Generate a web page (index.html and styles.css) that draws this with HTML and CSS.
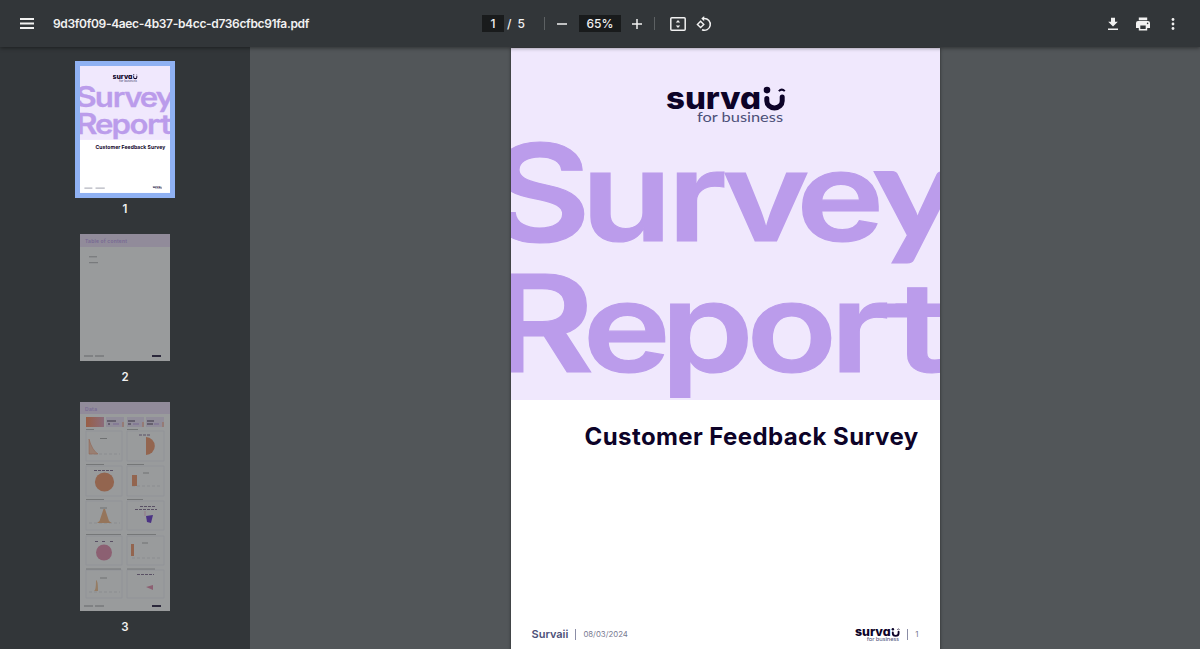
FILE: index.html
```html
<!DOCTYPE html>
<html lang="en">
<head>
  <meta charset="UTF-8">
  <title>9d3f0f09-4aec-4b37-b4cc-d736cfbc91fa.pdf</title>
  <meta name="viewport" content="width=device-width, initial-scale=1">
  <link rel="stylesheet" href="styles.css">
</head>
<body>
  <!-- shared artwork -->
  <svg class="defs" width="0" height="0">
    <symbol id="logo" viewBox="0 0 120 40">
      <text class="logo-name" x="0" y="25" textLength="95" lengthAdjust="spacingAndGlyphs">surva</text>
      <circle cx="101" cy="5.8" r="3.3" fill="#0d0328"/>
      <path d="M100.8 14.2v2.4a7.7 7 0 0 0 15.4 0v-4" fill="none" stroke="#0d0328" stroke-width="5" stroke-linecap="round"/>
      <path d="M112.8 6.8q3-3 6 0" fill="none" stroke="#0d0328" stroke-width="2"/>
      <text class="logo-sub" x="31" y="38" textLength="86" lengthAdjust="spacingAndGlyphs">for business</text>
    </symbol>
    <symbol id="cover" viewBox="0 0 429 352">
      <rect width="429" height="352" fill="#f0e8fd"/>
      <use href="#logo" x="155" y="36.3" width="120" height="40"/>
      <text class="cover-word" transform="scale(1.19 1)" y="193.2" x="-20 58.9 131.5 177.6 239.8 304.8">S<tspan class="lower">urve</tspan><tspan class="straight-y">y</tspan></text>
      <text class="cover-word" transform="scale(1.19 1)" y="323.8" x="-17.5 60.3 125.8 198 268.3 322.4">R<tspan class="lower">eport</tspan></text>
      <rect x="366" y="255.5" width="30" height="14" fill="#bb9ceb"/>
    </symbol>
  </svg>

  <header class="toolbar">
    <div class="toolbar-start">
      <svg class="icon-menu" width="14" height="11" viewBox="0 0 14 11"><path d="M0 1h14M0 5.5h14M0 10h14" stroke="#f1f1f1" stroke-width="1.8"/></svg>
      <span class="file-name">9d3f0f09-4aec-4b37-b4cc-d736cfbc91fa.pdf</span>
    </div>
    <div class="toolbar-center">
      <span class="field page-field">1</span>
      <span class="slash">/</span>
      <span class="page-total">5</span>
      <i class="divider"></i>
      <svg class="icon-minus" width="12" height="12" viewBox="0 0 12 12"><path d="M1 6h10" stroke="#f1f1f1" stroke-width="1.5"/></svg>
      <span class="field zoom-field">65%</span>
      <svg class="icon-plus" width="12" height="12" viewBox="0 0 12 12"><path d="M1 6h10M6 1v10" stroke="#f1f1f1" stroke-width="1.5"/></svg>
      <i class="divider divider-end"></i>
      <svg class="icon-fit" width="16" height="14" viewBox="0 0 16 14"><rect x=".8" y=".8" width="14.4" height="12.4" rx="1" fill="none" stroke="#f1f1f1" stroke-width="1.5"/><path d="M8 3l2.2 2.6H5.8zM8 11l2.2-2.6H5.8z" fill="#f1f1f1"/></svg>
      <svg class="icon-rotate" width="16" height="16" viewBox="0 0 16 16"><path d="M4.6 5.2l3.2 3.2-3.2 3.2-3.2-3.2z" fill="none" stroke="#f1f1f1" stroke-width="1.4"/><path d="M6.5 2.5h1.7a5.9 5.9 0 1 1-2.2 11.3" fill="none" stroke="#f1f1f1" stroke-width="1.5"/><path d="M8.2 0v5.2L5.3 2.6z" fill="#f1f1f1"/></svg>
    </div>
    <div class="toolbar-end">
      <svg width="12" height="14" viewBox="0 0 12 14"><path d="M4 .8h4v4h2.8L6 9.6 1.2 4.8H4zM1 11.4h10V13H1z" fill="#f1f1f1"/></svg>
      <svg width="16" height="14" viewBox="0 0 16 14"><path d="M3.8.6h8.4v2.7H3.8zM3 4h10a2 2 0 0 1 2 2v5h-2.8v2.6H3.8V11H1V6a2 2 0 0 1 2-2zm2.3 4.6v3.5h5.4V8.6z" fill="#f1f1f1" fill-rule="evenodd"/><circle cx="12.6" cy="6.4" r=".8" fill="#323639"/></svg>
      <svg class="icon-more" width="4" height="14" viewBox="0 0 4 14" fill="#f1f1f1"><circle cx="2" cy="2.5" r="1.4"/><circle cx="2" cy="7" r="1.4"/><circle cx="2" cy="11.5" r="1.4"/></svg>
    </div>
  </header>

  <div class="viewer">
    <aside class="sidebar">
      <div class="thumb active">
        <svg width="90" height="127" viewBox="0 0 429 605">
          <rect width="429" height="605" fill="#fff"/>
          <use href="#cover" width="429" height="352"/>
          <text class="thumb-title" x="74" y="397" textLength="333">Customer Feedback Survey</text>
          <path d="M21 582h38M74 582h44" stroke="#b4b5bf" stroke-width="6"/>
          <use href="#logo" x="346" y="573" width="45" height="15"/>
        </svg>
      </div>
      <div class="thumb-number">1</div>

      <div class="thumb">
        <svg width="90" height="127" viewBox="0 0 90 127">
          <rect width="90" height="127" fill="#fff"/>
          <rect width="90" height="13" fill="#f0e0fb"/>
          <text x="5" y="8.6" class="mini-heading" textLength="42">Table of content</text>
          <path d="M9 22.8h8M9 28.7h9" stroke="#999" stroke-width=".8"/>
          <path d="M4 122h9M15 122h9" stroke="#999" stroke-width="1"/>
          <path d="M72 122h9" stroke="#0d0328" stroke-width="1.8"/>
        </svg>
      </div>
      <div class="thumb-number">2</div>

      <div class="thumb">
        <svg width="90" height="209" viewBox="0 0 90 209">
          <defs>
            <linearGradient id="warm"><stop offset="0" stop-color="#ff8752"/><stop offset="1" stop-color="#e3a2bd"/></linearGradient>
          </defs>
          <rect width="90" height="209" fill="#fff"/>
          <rect width="90" height="12" fill="#f0e0fb"/>
          <text x="5" y="8.5" class="mini-heading" textLength="12">Data</text>
          <rect x="6" y="15" width="18" height="10" fill="url(#warm)"/>
          <g fill="#f0e4fa"><rect x="26" y="15" width="18" height="10"/><rect x="47" y="15" width="17" height="10"/><rect x="66" y="15" width="18" height="10"/></g>
          <path d="M27 19h9M48 19h7M67 19h7M28 22h2M48 22h3M67 22h6" stroke="#40304f" stroke-width="1"/>
          <path d="M33 22h6M53 22h6M74 22h5" stroke="#bd9ceb"/>
          <path d="M43 20v5M63 20v5M83 20v5" stroke="#ff9a6f"/>
          <!-- chart cards -->
          <g fill="none" stroke="#e7e7ed" stroke-width=".6">
            <rect x="6" y="29" width="36" height="30"/><rect x="47" y="29" width="37" height="30"/>
            <rect x="6" y="64" width="36" height="30"/><rect x="47" y="64" width="37" height="30"/>
            <rect x="6" y="99" width="36" height="29"/><rect x="47" y="99" width="37" height="29"/>
            <rect x="6" y="134" width="36" height="29"/><rect x="47" y="134" width="37" height="29"/>
            <rect x="6" y="168" width="36" height="28"/><rect x="47" y="168" width="37" height="28"/>
          </g>
          <path d="M6 27.5h8M47 27.5h11M6 62.5h18M47 62.5h17M6 97.5h18M47 97.5h16M6 132.5h35M47 132.5h29M6 167h35M47 167h28" stroke="#999" stroke-width=".7"/>
          <path d="M9 52h31M52 84h28M9 121h31M52 156h28M9 190h31" stroke="#bbb" stroke-width=".4" stroke-dasharray="3 2"/>
          <path d="M9 52V37q3 11 9 15z" fill="#ffc9ae" stroke="#ee8c60" stroke-width=".5"/>
          <path d="M66 35a8.8 9 0 0 1 0 18z" fill="#f49465"/>
          <circle cx="24.5" cy="80" r="9.6" fill="#f49465"/>
          <rect x="52" y="73" width="5" height="11" fill="#f49465"/>
          <path d="M17 121l2.5-2 4-12h1.5l4 12 2.5 2z" fill="#f8b47e"/>
          <path d="M66 114l7-1-2 8-4-1z" fill="#6531ce"/><path d="M65 109v5" stroke="#e7a" stroke-width=".5"/>
          <circle cx="24" cy="150.5" r="8" fill="#e68bac"/>
          <rect x="51" y="142" width="3" height="12" fill="#f49465"/>
          <path d="M14 189q2 0 2-11 2 0 2 11z" fill="#f8c28f"/>
          <path d="M66 185l7-2v5z" fill="#e68bac"/>
          <path d="M14 68.5h19M59 33h12M60 104.5h15M55 107.5h22M15 139.5h4M22 139.5h4M30 139.5h3M57 172.5h17" stroke="#806a90" stroke-width="1" stroke-dasharray="3 1"/>
          <path d="M20 36.5h7M63 71h6M20 106h7M62 141h6M20 176h7" stroke="#888" stroke-width=".7"/>
          <path d="M4 204h9M15 204h9" stroke="#999"/><path d="M72 204h9" stroke="#0d0328" stroke-width="1.8"/>
        </svg>
      </div>
      <div class="thumb-number">3</div>
    </aside>

    <main class="content">
      <article class="page">
        <svg class="cover" width="429" height="352"><use href="#cover"/></svg>
        <h1 class="survey-title">Customer Feedback Survey</h1>
        <footer class="page-footer">
          <span class="brand">Survaii</span>
          <i class="bar"></i>
          <span class="date">08/03/2024</span>
          <svg class="footer-logo" width="45" height="15"><use href="#logo"/></svg>
          <i class="bar"></i>
          <span class="date">1</span>
        </footer>
      </article>
    </main>
  </div>
</body>
</html>
```
FILE: styles.css
```css
* {
  box-sizing: border-box;
}
body {
  margin: 0;
  height: 649px;
  overflow: hidden;
  display: flex;
  flex-direction: column;
  font-family: Inter, "Liberation Sans", sans-serif;
  background: #525659;
}
svg {
  display: block;
  flex: none;
}
.defs {
  position: absolute;
}
.toolbar {
  position: relative;
  z-index: 1;
  flex: none;
  height: 47px;
  display: grid;
  grid-template-columns: 482px 1fr auto;
  align-items: center;
  background: #323639;
  color: #f1f1f1;
  font-size: 12px;
  font-weight: 500;
  box-shadow: 0 1px 4px rgba(0, 0, 0, 0.45);
}
.toolbar-start,
.toolbar-center,
.toolbar-end {
  display: flex;
  align-items: center;
}
.toolbar-start {
  padding-left: 20px;
  gap: 19px;
}
.toolbar-end {
  gap: 16px;
  padding-right: 25px;
}
.icon-more {
  margin-left: 4px;
}
.file-name {
  font-weight: 600;
  letter-spacing: -0.34px;
}
.field {
  height: 17px;
  line-height: 17px;
  text-align: center;
  background: #191b1c;
}
.page-field {
  width: 22px;
}
.slash {
  margin-left: 3px;
}
.page-total {
  margin-left: 6px;
}
.divider {
  width: 1px;
  height: 13px;
  margin: 0 11px 0 19px;
  background: #5d6163;
}
.zoom-field {
  width: 42px;
  margin: 0 10px 0 11px;
}
.divider-end {
  margin: 0 15px 0 11px;
}
.icon-rotate {
  margin-left: 10px;
}
.viewer {
  flex: 1;
  min-height: 0;
  display: flex;
}
.sidebar {
  width: 250px;
  padding-top: 14.4px;
  display: flex;
  flex-direction: column;
  align-items: center;
  background: #323639;
}
.thumb {
  flex: none;
  padding: 5px;
}
.thumb svg {
  opacity: 0.5;
}
.thumb.active {
  height: 136.6px;
  background: #8fb1f3;
}
.thumb.active svg {
  opacity: 1;
}
.thumb-number {
  flex: none;
  height: 30.8px;
  padding-top: 4px;
  line-height: 15px;
  font-size: 11.5px;
  font-weight: 600;
  color: #f1f1f1;
}
.content {
  flex: 1;
  display: flex;
  justify-content: center;
  padding-top: 1px;
}
.page {
  width: 429px;
  height: 607px;
  flex: none;
  background: #fff;
  box-shadow: 0 0 3px rgba(0, 0, 0, 0.5);
}
.logo-name {
  font: 800 31px Inter, sans-serif;
  font-feature-settings: "cv11";
  fill: #0d0328;
}
.logo-sub {
  font: 400 14px Lato, sans-serif;
  fill: #4c5078;
}
.cover-word {
  font: 600 134px Inter, sans-serif;
  fill: #bb9ceb;
  stroke: #bb9ceb;
  stroke-width: 1.2;
}
.lower {
  font-size: 125px;
}
.straight-y {
  font: 700 135px Lato, sans-serif;
}
.thumb-title {
  font: 700 24px Inter, sans-serif;
  fill: #0d0328;
}
.mini-heading {
  font: 600 5px Inter, sans-serif;
  fill: #bb9ceb;
}
.survey-title {
  margin: 0;
  padding: 21px 21px 0 0;
  line-height: 32px;
  text-align: right;
  font-size: 24px;
  font-weight: 650;
  letter-spacing: 0.4px;
  color: #0d0328;
}
.page-footer {
  display: flex;
  align-items: center;
  height: 16px;
  margin-top: 173px;
  padding: 0 21px;
  color: #4c5078;
}
.brand {
  font-size: 11px;
  font-weight: 600;
}
.bar {
  width: 1px;
  height: 11px;
  margin: 0 7px;
  background: #8b8da6;
}
.date {
  font-size: 7.8px;
  color: #777990;
}
.footer-logo {
  margin-left: auto;
}
```
